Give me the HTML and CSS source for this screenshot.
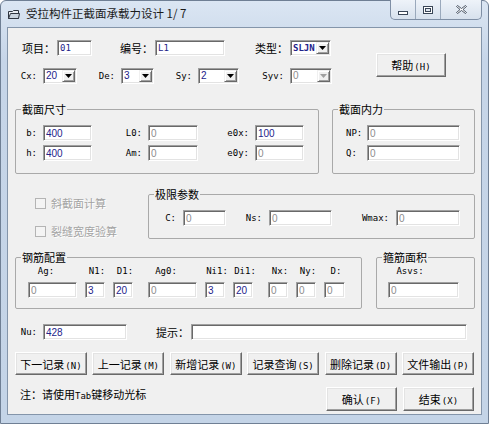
FILE: index.html
```html
<!DOCTYPE html>
<html lang="zh-CN">
<head>
    <meta charset="UTF-8">
    <title>受拉构件正截面承载力设计</title>
    <link rel="stylesheet" href="styles.css">
</head>
<body>

<div class="window">
    <div class="titlebar">
        <svg class="app-icon" width="12" height="11" viewBox="0 0 12 11">
            <path d="M0.5 2.5 L4.5 2.5 L5.5 1.5 L10.5 1.5 L10.5 9.5 L0.5 9.5 Z" fill="#e9edf2" stroke="#2e3540"/>
            <path d="M2.5 4.5 L11.5 4.5 L10.5 9.5 L0.5 9.5 Z" fill="#c9d3de" stroke="#2e3540"/>
        </svg>
        <span class="title">受拉构件正截面承载力设计 1/ 7</span>
        <div class="caption-btns">
            <span class="cap cap-min">
                <svg width="10" height="4" viewBox="0 0 10 4"><rect x="0.5" y="0.5" width="9" height="3" fill="#fff" stroke="#3a4657"/></svg>
            </span>
            <span class="cap cap-max">
                <svg width="10" height="8" viewBox="0 0 10 8"><rect x="0.5" y="0.5" width="9" height="7" fill="#fff" stroke="#3a4657"/><rect x="2.5" y="2.5" width="5" height="3" fill="#dfe6ef" stroke="#3a4657"/></svg>
            </span>
            <span class="cap cap-close">
                <svg width="11" height="9" viewBox="0 0 11 9"><path d="M1.5 0.5 L5.5 3.5 L9.5 0.5 L10.5 1.5 L7 4.5 L10.5 7.5 L9.5 8.5 L5.5 5.5 L1.5 8.5 L0.5 7.5 L4 4.5 L0.5 1.5 Z" fill="#fff" stroke="#3a4657" stroke-width="0.9"/></svg>
            </span>
        </div>
    </div>

    <div class="client">
        <!-- project / id / type and the code switches -->
        <div class="head">
            <div class="head-fields">
                <div class="row row-a">
                    <span class="lbl">项目：</span>
                    <input class="edit mono-val" type="text" value="01">
                    <span class="lbl">编号：</span>
                    <input class="edit mono-val" type="text" value="L1">
                    <span class="lbl">类型：</span>
                    <div class="combo"><span class="combo-val mono-val bold">SLJN</span><span class="combo-btn"><svg width="7" height="4" viewBox="0 0 7 4"><polygon points="0,0 7,0 3.5,4" fill="#000"/></svg></span></div>
                </div>
                <div class="row row-b">
                    <span class="lbl mono">Cx:</span>
                    <div class="combo"><span class="combo-val">20</span><span class="combo-btn"><svg width="7" height="4" viewBox="0 0 7 4"><polygon points="0,0 7,0 3.5,4" fill="#000"/></svg></span></div>
                    <span class="lbl mono">De:</span>
                    <div class="combo"><span class="combo-val">3</span><span class="combo-btn"><svg width="7" height="4" viewBox="0 0 7 4"><polygon points="0,0 7,0 3.5,4" fill="#000"/></svg></span></div>
                    <span class="lbl mono">Sy:</span>
                    <div class="combo"><span class="combo-val">2</span><span class="combo-btn"><svg width="7" height="4" viewBox="0 0 7 4"><polygon points="0,0 7,0 3.5,4" fill="#000"/></svg></span></div>
                    <span class="lbl mono">Syv:</span>
                    <div class="combo off"><span class="combo-val">0</span><span class="combo-btn"><svg width="7" height="4" viewBox="0 0 7 4"><polygon points="0,0 7,0 3.5,4" fill="#a0a0a0"/></svg></span></div>
                </div>
            </div>
            <button class="btn btn-help">帮助<span class="acc">(H)</span></button>
        </div>

        <div class="groups groups-top">
            <fieldset class="group sec-size">
                <legend>截面尺寸</legend>
                <div class="grid">
                    <span class="lbl mono">b:</span>
                    <input class="edit" type="text" value="400">
                    <span class="lbl mono">L0:</span>
                    <input class="edit off" type="text" value="0">
                    <span class="lbl mono">e0x:</span>
                    <input class="edit" type="text" value="100">
                    <span class="lbl mono">h:</span>
                    <input class="edit" type="text" value="400">
                    <span class="lbl mono">Am:</span>
                    <input class="edit off" type="text" value="0">
                    <span class="lbl mono">e0y:</span>
                    <input class="edit off" type="text" value="0">
                </div>
            </fieldset>
            <fieldset class="group sec-force">
                <legend>截面内力</legend>
                <div class="grid">
                    <span class="lbl mono">NP:</span>
                    <input class="edit off" type="text" value="0">
                    <span class="lbl mono">Q:</span>
                    <input class="edit off" type="text" value="0">
                </div>
            </fieldset>
        </div>

        <div class="mid">
            <div class="checks">
                <label class="check"><span class="box"></span>斜截面计算</label>
                <label class="check"><span class="box"></span>裂缝宽度验算</label>
            </div>
            <fieldset class="group sec-limit">
                <legend>极限参数</legend>
                <div class="grid">
                    <span class="lbl mono">C:</span>
                    <input class="edit off" type="text" value="0">
                    <span class="lbl mono">Ns:</span>
                    <input class="edit off" type="text" value="0">
                    <span class="lbl mono">Wmax:</span>
                    <input class="edit off" type="text" value="0">
                </div>
            </fieldset>
        </div>

        <div class="groups groups-bars">
            <fieldset class="group sec-bars">
                <legend>钢筋配置</legend>
                <div class="cells">
                    <div class="cell cell-area"><span class="cap mono">Ag:</span><input class="edit off" type="text" value="0"></div>
                    <div class="cell"><span class="cap mono">N1:</span><input class="edit" type="text" value="3"></div>
                    <div class="cell"><span class="cap mono">D1:</span><input class="edit" type="text" value="20"></div>
                    <div class="cell cell-area wide-gap"><span class="cap mono">Ag0:</span><input class="edit off" type="text" value="0"></div>
                    <div class="cell"><span class="cap mono">Ni1:</span><input class="edit" type="text" value="3"></div>
                    <div class="cell"><span class="cap mono">Di1:</span><input class="edit" type="text" value="20"></div>
                    <div class="cell wide-gap"><span class="cap mono">Nx:</span><input class="edit off" type="text" value="0"></div>
                    <div class="cell"><span class="cap mono">Ny:</span><input class="edit off" type="text" value="0"></div>
                    <div class="cell cell-d"><span class="cap mono">D:</span><input class="edit off" type="text" value="0"></div>
                </div>
            </fieldset>
            <fieldset class="group sec-stirrup">
                <legend>箍筋面积</legend>
                <div class="cell"><span class="cap mono">Asvs:</span><input class="edit off" type="text" value="0"></div>
            </fieldset>
        </div>

        <div class="row row-nu">
            <span class="lbl mono">Nu:</span>
            <input class="edit" type="text" value="428">
            <span class="lbl">提示：</span>
            <input class="edit" type="text" value="">
        </div>

        <div class="btn-row">
            <button class="btn">下一记录<span class="acc">(N)</span></button>
            <button class="btn">上一记录<span class="acc">(M)</span></button>
            <button class="btn">新增记录<span class="acc">(W)</span></button>
            <button class="btn">记录查询<span class="acc">(S)</span></button>
            <button class="btn">删除记录<span class="acc">(D)</span></button>
            <button class="btn">文件输出<span class="acc">(P)</span></button>
        </div>

        <div class="foot">
            <span class="note">注：请使用<span class="mono">Tab</span>键移动光标</span>
            <button class="btn">确认<span class="acc">(F)</span></button>
            <button class="btn">结束<span class="acc">(X)</span></button>
        </div>
    </div>
</div>

</body>
</html>
```

FILE: styles.css
```css
body {
    margin: 0;
    font-family: "Noto Sans CJK SC", "Liberation Sans", sans-serif;
    font-size: 11px;
    color: #000;
    background: #fff;
}

.window {
    width: 489px;
    height: 424px;
    box-sizing: border-box;
    display: flex;
    flex-direction: column;
    padding: 0 6px 8px 6px;
    border: 1px solid #6f7f94;
    border-radius: 6px 6px 0 0;
    background: linear-gradient(#dbe6f3, #c6d5e8 60px, #c4d4e7);
}

/* caption */
.titlebar {
    height: 26px;
    margin: 0 -6px;
    display: flex;
    align-items: flex-start;
}
.app-icon {
    margin: 8px 0 0 7px;
}
.title {
    margin: 5px 0 0 6px;
    line-height: 15px;
    font-size: 11.5px;
    color: #1b1b1b;
}
.caption-btns {
    margin-left: auto;
    margin-right: 6px;
    margin-top: -1px;
    display: flex;
    height: 19px;
    border: 1px solid #7f8fa5;
    border-top: none;
    border-radius: 0 0 5px 5px;
    overflow: hidden;
    background: linear-gradient(#eef3f9, #d7e1ed);
}
.cap {
    display: flex;
    align-items: center;
    justify-content: center;
    width: 24px;
    border-left: 1px solid #9aa9bc;
}
.cap:first-child {
    border-left: none;
}
.cap-min svg {
    margin-top: 6px;
}
.cap-close {
    width: 40px;
}

.client {
    flex: 1;
    display: flex;
    flex-direction: column;
    background: #f0f0f0;
    border: 1px solid #8495aa;
}

/* text fields and combos */
.edit {
    box-sizing: border-box;
    width: 100%;
    height: 16px;
    margin: 0;
    padding: 0 2px;
    border: 1px solid;
    border-color: #a0a0a0 #fff #fff #a0a0a0;
    box-shadow: inset 1px 1px 0 #696969, inset -1px -1px 0 #e3e3e3;
    background: #fff;
    font-family: "Liberation Sans", sans-serif;
    font-size: 10px;
    color: #23238a;
    outline: none;
}
.edit.off {
    color: #8d8d8d;
}
.mono {
    font-family: "DejaVu Sans Mono", monospace;
    font-size: 9px;
}
.mono-val {
    font-family: "DejaVu Sans Mono", monospace;
    font-size: 9px;
}
.bold {
    font-weight: bold;
}

.combo {
    box-sizing: border-box;
    height: 16px;
    display: flex;
    align-items: stretch;
    border: 1px solid;
    border-color: #a0a0a0 #fff #fff #a0a0a0;
    box-shadow: inset 1px 1px 0 #696969, inset -1px -1px 0 #e3e3e3;
    background: #fff;
}
.combo-val {
    flex: 1;
    padding-left: 2px;
    line-height: 14px;
    font-family: "Liberation Sans", sans-serif;
    font-size: 10px;
    color: #23238a;
}
.combo-val.mono-val {
    font-family: "DejaVu Sans Mono", monospace;
    font-size: 9px;
}
.combo.off .combo-val {
    color: #8d8d8d;
}
.combo-btn {
    width: 13px;
    margin: 1px 1px 1px 0;
    display: flex;
    align-items: center;
    justify-content: center;
    box-sizing: border-box;
    background: #f0f0f0;
    border: 1px solid;
    border-color: #f0f0f0 #696969 #696969 #f0f0f0;
    box-shadow: inset 1px 1px 0 #fff, inset -1px -1px 0 #a0a0a0;
}

.lbl {
    line-height: 16px;
    text-align: right;
    padding-right: 2px;
    white-space: nowrap;
}
.lbl.mono {
    padding-right: 6px;
}

/* buttons */
.btn {
    box-sizing: border-box;
    height: 23px;
    padding: 0;
    border: 1px solid;
    border-color: #fff #696969 #696969 #fff;
    box-shadow: inset -1px -1px 0 #a0a0a0, inset 1px 1px 0 #e3e3e3;
    background: #f0f0f0;
    font-family: "Noto Sans CJK SC", sans-serif;
    font-size: 11px;
    color: #000;
    white-space: nowrap;
}
.acc {
    font-family: "DejaVu Sans Mono", monospace;
    font-size: 9px;
    margin-left: 1px;
}

/* top block */
.head {
    display: flex;
    margin-top: 12px;
}
.head-fields {
    width: 368px;
    display: flex;
    flex-direction: column;
    gap: 12px;
}
.row {
    display: grid;
    height: 16px;
}
.row-a {
    grid-template-columns: 49px 35px 63px 70px 65px 41px;
}
.row-b {
    grid-template-columns: 35px 34px 44px 33px 44px 41px 51px 42px;
}
.btn-help {
    width: 70px;
    height: 24px;
    margin-top: 13px;
}

/* group boxes */
.group {
    box-sizing: border-box;
    margin: 0;
    padding: 0;
    min-width: 0;
    border: 1px solid #a9a9a9;
    border-radius: 2px;
}
.group legend {
    margin-left: 5px;
    padding: 0 1px;
    line-height: 12px;
    font-size: 11px;
}
.group .grid {
    display: grid;
    row-gap: 4px;
    margin-top: 10px;
}

.groups {
    display: flex;
    padding-left: 7px;
}
.groups-top {
    margin-top: 19px;
}
.sec-size {
    width: 304px;
    height: 71px;
}
.sec-size .grid {
    grid-template-columns: 27px 49px 56px 50px 57px 49px;
}
.sec-force {
    width: 143px;
    height: 71px;
    margin-left: 13px;
}
.sec-force .grid {
    grid-template-columns: 34px 93px;
}
.sec-force .lbl {
    text-align: left;
    padding-left: 13px;
}

.mid {
    display: flex;
    margin-top: 14px;
}
.checks {
    width: 140px;
    padding-top: 8px;
    display: flex;
    flex-direction: column;
    gap: 14px;
}
.check {
    display: flex;
    align-items: center;
    height: 14px;
    padding-left: 27px;
    color: #a3a3a3;
    text-shadow: 1px 1px 0 #fff;
}
.box {
    box-sizing: border-box;
    width: 11px;
    height: 11px;
    margin-right: 5px;
    border: 1px solid #b4b4b4;
    background: #f4f4f4;
}
.sec-limit {
    width: 327px;
    height: 51px;
}
.sec-limit .grid {
    grid-template-columns: 34px 43px 43px 63px 64px 64px;
}
.sec-limit .lbl.mono {
    padding-right: 7px;
}

.groups-bars {
    margin-top: 12px;
}
.sec-bars {
    width: 347px;
    height: 58px;
}
.cells {
    display: flex;
    gap: 8px;
    padding-left: 12px;
    margin-top: 2px;
}
.cell {
    display: flex;
    flex-direction: column;
    gap: 5px;
    width: 20px;
}
.cell .cap {
    line-height: 12px;
    white-space: nowrap;
}
.cell-area {
    width: 49px;
}
.cell-area .cap {
    padding-left: 6px;
}
.cell-d {
    width: 21px;
}
.wide-gap {
    margin-left: 7px;
}
.sec-stirrup {
    width: 99px;
    height: 58px;
    margin-left: 14px;
}
.sec-stirrup .cell {
    width: 71px;
    margin: 2px 0 0 11px;
}
.sec-stirrup .cap {
    padding-left: 10px;
}

.row-nu {
    margin-top: 15px;
    grid-template-columns: 35px 84px 64px 276px;
}

.btn-row {
    display: flex;
    justify-content: space-between;
    margin-top: 12px;
    padding: 0 7px;
}
.btn-row .btn {
    width: 72px;
}

.foot {
    display: flex;
    align-items: flex-start;
    gap: 6px;
    margin-top: 12px;
    padding: 0 7px 0 12px;
}
.note {
    flex: 1;
    line-height: 14px;
}
.foot .btn {
    width: 71px;
    height: 24px;
}
```
